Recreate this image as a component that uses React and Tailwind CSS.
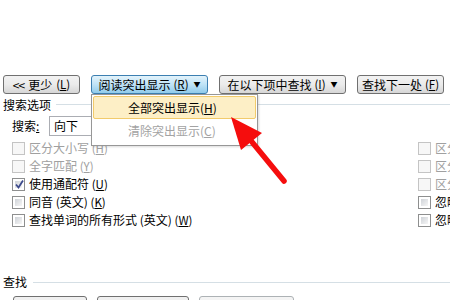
import React from "react";

const F = { fontFamily: '"Noto Sans CJK SC", "Noto Sans", sans-serif' };

function Btn({ children, className = "" }) {
  return (
    <div
      className={
        "flex h-[19px] items-center justify-center rounded-[3px] border border-[#707070] bg-gradient-to-b from-[#f2f2f2] via-[#ebebeb] to-[#d6d6d6] text-[12px] leading-none text-black " +
        className
      }
    >
      {children}
    </div>
  );
}

function Box({ state }) {
  if (state === "disabled") {
    return <div className="h-[13px] w-[13px] shrink-0 border border-[#c4c4c4] bg-[#f7f7f7]" />;
  }
  return (
    <div className="relative h-[13px] w-[13px] shrink-0 border border-[#8e8f8f] bg-white p-[2px]">
      <div className="h-full w-full bg-gradient-to-br from-[#cfd3d8] to-[#f6f6f6]" />
      {state === "checked" && (
        <svg className="absolute left-[1px] top-[0px]" width="11" height="11" viewBox="0 0 11 11">
          <path d="M2 5.5 L4.5 8.5 L9 1.5" fill="none" stroke="#3d4a8c" strokeWidth="1.8" />
        </svg>
      )}
    </div>
  );
}

function Row({ state, children }) {
  return (
    <div className="flex h-[18px] items-center gap-[4px]">
      <Box state={state} />
      <span className={"whitespace-nowrap text-[12px] leading-none " + (state === "disabled" ? "text-[#a0a0a0]" : "text-black")}>
        {children}
      </span>
    </div>
  );
}

const U = ({ c }) => (
  <span className="text-[11.5px]">
    (<span className="underline">{c}</span>)
  </span>
);

export default function App() {
  return (
    <div className="relative h-[300px] w-[450px] overflow-hidden bg-white" style={F}>
      <div className="h-[75px]" />
      <div className="flex h-[19px] items-center pl-[3px]">
        <Btn className="w-[77px] gap-[4px]">
          <span className="text-[12px] tracking-[-1px]">&lt;&lt;</span>
          <span>更少</span>
          <U c="L" />
        </Btn>
        <div className="ml-[11px] flex h-[19px] w-[117px] items-center justify-center gap-[3px] rounded-[3px] border border-[#3c7fb1] bg-gradient-to-b from-[#e3f3fb] via-[#bfe3f6] to-[#90cbeb] text-[12px] leading-none text-black">
          <span>阅读突出显示</span>
          <U c="R" />
          <span className="ml-[2px] text-[7px]">▼</span>
        </div>
        <Btn className="ml-[11px] w-[127px] gap-[3px]">
          <span>在以下项中查找</span>
          <U c="I" />
          <span className="ml-[2px] text-[7px]">▼</span>
        </Btn>
        <Btn className="ml-[11px] w-[87px] gap-[3px]">
          <span>查找下一处</span>
          <U c="F" />
        </Btn>
      </div>

      <div className="flex h-[21px] items-center pl-[3px]">
        <span className="text-[12px] leading-none text-black">搜索选项</span>
        <div className="ml-[5px] h-px flex-1 bg-[#d5dfe5]" />
      </div>

      <div className="mt-[1px] flex h-[20px] items-center pl-[12px]">
        <span className="w-[37px] text-[12px] leading-none text-black">
          搜索<span className="underline">:</span>
        </span>
        <div className="flex h-[20px] w-[160px] items-center border border-[#abadb3] pl-[4px] text-[12px] leading-none text-black">
          向下
        </div>
      </div>

      <div className="mt-[3px] flex">
        <div className="flex flex-1 flex-col pl-[12px]">
          <Row state="disabled">区分大小写 <U c="H" /></Row>
          <Row state="disabled">全字匹配 <U c="Y" /></Row>
          <Row state="checked">使用通配符 <U c="U" /></Row>
          <Row state="on">同音 (英文) <U c="K" /></Row>
          <Row state="on">查找单词的所有形式 (英文) <U c="W" /></Row>
        </div>
        <div className="flex w-[32px] flex-col overflow-hidden">
          <Row state="disabled">区分前缀</Row>
          <Row state="disabled">区分后缀</Row>
          <Row state="disabled">区分全/半角</Row>
          <Row state="on">忽略标点符号</Row>
          <Row state="on">忽略空格</Row>
        </div>
      </div>

      <div className="mt-[44px] flex h-[18px] items-center pl-[3px]">
        <span className="text-[12px] leading-none text-black">查找</span>
        <div className="ml-[6px] h-px flex-1 bg-[#d5dfe5]" />
      </div>
      <div className="mt-[5px] flex pl-[13px]">
        <div className="h-[19px] w-[74px] rounded-[3px] border border-[#707070] bg-[#f0f0f0]" />
        <div className="ml-[10px] h-[19px] w-[92px] rounded-[3px] border border-[#707070] bg-[#f0f0f0]" />
        <div className="ml-[10px] h-[19px] w-[95px] rounded-[3px] border border-[#adb2b5] bg-[#f4f4f4]" />
      </div>

      {/* dropdown menu */}
      <div className="absolute left-[91px] top-[94px] flex h-[52px] w-[167px] flex-col border border-[#979797] bg-white p-[1px] shadow-[1px_1px_2px_rgba(0,0,0,0.15)]">
        <div className="flex h-[23px] items-center rounded-[2px] border border-[#f2cb6b] bg-[#fdefc6] pl-[34px] text-[12px] leading-none text-black">
          全部突出显示(<span className="underline">H</span>)
        </div>
        <div className="flex h-[24px] items-center pl-[35px] text-[12px] leading-none text-[#a3a3a3]">
          清除突出显示(<span className="underline">C</span>)
        </div>
      </div>

      {/* red arrow */}
      <svg className="absolute left-0 top-0" width="450" height="300" viewBox="0 0 450 300">
        <line x1="252" y1="142" x2="284" y2="181" stroke="#f50d0d" strokeWidth="5.5" strokeLinecap="round" />
        <polygon points="231,117 262,133 241,150" fill="#f50d0d" />
      </svg>
    </div>
  );
}
